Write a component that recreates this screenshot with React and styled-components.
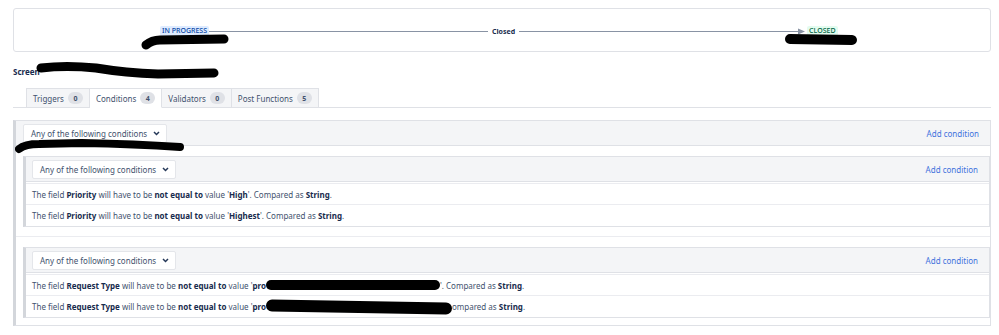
import React from 'react';
import styled, { createGlobalStyle } from 'styled-components';

const GlobalStyle = createGlobalStyle`
  body {
    margin: 0;
    background: #fff;
    font-family: "Noto Sans", "Open Sans", sans-serif;
    color: #42526e;
  }
`;

const Page = styled.div`
  padding: 8px 8px 0 13px;
  width: 978px;
`;

/* workflow diagram */
const Diagram = styled.div`
  position: relative;
  height: 42px;
  border: 1px solid #dfe1e6;
  border-radius: 3px;
  display: flex;
  align-items: center;
  padding-left: 146px;
`;

const Status = styled.span`
  position: relative;
  font-size: 7px;
  font-weight: 500;
  line-height: 10px;
  padding: 0 2px;
  border-radius: 2px;
  margin-top: 2px;
  background: ${p => (p.done ? '#e3fcef' : '#deebff')};
  color: ${p => (p.done ? '#006644' : '#0747a6')};
`;

const Line = styled.span`
  display: block;
  height: 1px;
  width: ${p => p.w}px;
  background: #8993a4;
  margin-top: 2px;
`;

const Transition = styled.span`
  font-size: 7px;
  font-weight: 700;
  color: #172b4d;
  padding: 0 4px;
  margin-top: 2px;
`;

const Arrow = styled.svg`
  display: block;
  margin: 2px 2px 0 -1px;
`;

const Scribble = styled.svg`
  position: absolute;
  left: ${p => p.x}px;
  top: ${p => p.y}px;
  pointer-events: none;
`;

const Ink = ({ d, w, h, x, y, sw = 9 }) => (
  <Scribble x={x} y={y} width={w} height={h} viewBox={`0 0 ${w} ${h}`}>
    <path d={d} fill="none" stroke="#000" strokeWidth={sw} strokeLinecap="round" strokeLinejoin="round" />
  </Scribble>
);

/* screen */
const ScreenRow = styled.div`
  display: flex;
  align-items: center;
  margin-top: 10px;
  height: 18px;
  font-size: 8px;
  font-weight: 700;
  color: #172b4d;
`;

const InlineInk = styled.svg`
  display: block;
  margin-left: -4px;
`;

/* tabs */
const Tabs = styled.div`
  display: flex;
  margin-top: 8px;
  padding-left: 13px;
  border-bottom: 1px solid #dfe1e6;
`;

const Tab = styled.div`
  display: flex;
  align-items: center;
  gap: 4px;
  height: 18px;
  padding: 0 6px;
  margin-bottom: -1px;
  font-size: 8px;
  color: #42526e;
  border: 1px solid #dfe1e6;
  border-left-width: ${p => (p.first ? 1 : 0)}px;
  border-bottom-color: ${p => (p.active ? '#fff' : '#dfe1e6')};
  background: ${p => (p.active ? '#fff' : '#f4f5f7')};
`;

const Badge = styled.span`
  display: inline-flex;
  align-items: center;
  justify-content: center;
  min-width: 15px;
  height: 12px;
  border-radius: 6px;
  background: #dfe1e6;
  font-size: 7px;
  font-weight: 700;
  color: #42526e;
`;

/* condition groups */
const Group = styled.div`
  margin-top: ${p => (p.nested ? 0 : 12)}px;
  border: 1px solid #dfe1e6;
  border-left: 3px solid #d3d6db;
  background: #fff;
`;

const GroupHeader = styled.div`
  position: relative;
  display: flex;
  align-items: center;
  justify-content: space-between;
  height: 24px;
  padding: 0 11px 0 ${p => (p.nested ? 6 : 7)}px;
  background: #f4f5f7;
  border-bottom: 1px solid #dfe1e6;
`;

const Select = styled.div`
  display: flex;
  align-items: center;
  justify-content: space-between;
  box-sizing: border-box;
  width: 144px;
  height: 19px;
  padding: 0 6px 0 7px;
  background: #fff;
  border: 1px solid #e4e6ea;
  border-radius: 2px;
  font-size: 8px;
  color: #42526e;
  white-space: nowrap;
`;

const AddLink = styled.a`
  font-size: 8px;
  color: #3f72dd;
  text-decoration: none;
`;

const GroupBody = styled.div`
  display: flex;
  flex-direction: column;
`;

const Slot = styled.div`
  padding: 10px 0 ${p => (p.last ? 7 : 9)}px 7px;
  border-bottom: ${p => (p.last ? 0 : 1)}px solid #ebecf0;
`;

const Rows = styled.div`
  margin-top: 1px;
  border-top: 1px solid #ebecf0;
`;

const Row = styled.div`
  display: flex;
  align-items: center;
  box-sizing: border-box;
  height: 21px;
  padding-left: 6px;
  border-bottom: ${p => (p.last ? 0 : 1)}px solid #ebecf0;
  font-size: 8px;
  color: #42526e;
  white-space: pre;

  b {
    color: #172b4d;
    font-weight: 700;
  }
`;

const Redacted = styled.span`
  display: inline-block;
  width: ${p => p.w}px;
  height: ${p => p.h}px;
  background: #000;
  border-radius: ${p => p.h / 2}px;
  transform: rotate(${p => p.tilt || 0}deg);
`;

const Chevron = () => (
  <svg width="7" height="5" viewBox="0 0 7 5">
    <path d="M1 1 L3.5 3.5 L6 1" fill="none" stroke="#253858" strokeWidth="1.5" />
  </svg>
);

const ConditionSelect = () => (
  <Select>
    <span>Any of the following conditions</span>
    <Chevron />
  </Select>
);

const rule = (field, value) => (
  <>
    The field <b>{field}</b> will have to be <b>not equal to</b> value '<b>{value}</b>'. Compared as <b>String</b>.
  </>
);

const tabs = [
  { label: 'Triggers', count: 0 },
  { label: 'Conditions', count: 4, active: true },
  { label: 'Validators', count: 0 },
  { label: 'Post Functions', count: 5 },
];

export default function App() {
  return (
    <Page>
      <GlobalStyle />
      <Diagram>
        <Status>
          IN PROGRESS
          <Ink x={-20} y={8} w={90} h={16} d="M6 11 Q12 6 20 6 L84 5" />
        </Status>
        <Line w={279} />
        <Transition>Closed</Transition>
        <Line w={280} />
        <Arrow width="7" height="7" viewBox="0 0 7 7">
          <path d="M0 0.5 L7 3.5 L0 6.5 Z" fill="#8993a4" />
        </Arrow>
        <Status done>
          CLOSED
          <Ink x={-26} y={6} w={80} h={16} sw={10} d="M9 7 L71 8" />
        </Status>
      </Diagram>

      <ScreenRow>
        Screen
        <InlineInk width="184" height="18" viewBox="0 0 184 18">
          <path d="M5 6 Q30 3 60 6 Q90 11 122 12 L178 11" fill="none" stroke="#000" strokeWidth="9" strokeLinecap="round" />
        </InlineInk>
      </ScreenRow>

      <Tabs>
        {tabs.map((t, i) => (
          <Tab key={t.label} first={i === 0} active={t.active}>
            {t.label}
            <Badge>{t.count}</Badge>
          </Tab>
        ))}
      </Tabs>

      <Group>
        <GroupHeader>
          <ConditionSelect />
          <AddLink href="#">Add condition</AddLink>
          <Ink x={-1} y={18} w={175} h={16} sw={8} d="M4 10 Q10 5 24 5 L67 4 Q120 5 165 8" />
        </GroupHeader>
        <GroupBody>
          <Slot>
            <Group nested>
              <GroupHeader nested>
                <ConditionSelect />
                <AddLink href="#">Add condition</AddLink>
              </GroupHeader>
              <Rows>
                <Row>{rule('Priority', 'High')}</Row>
                <Row last>{rule('Priority', 'Highest')}</Row>
              </Rows>
            </Group>
          </Slot>
          <Slot last>
            <Group nested>
              <GroupHeader nested>
                <ConditionSelect />
                <AddLink href="#">Add condition</AddLink>
              </GroupHeader>
              <Rows>
                <Row>
                  The field <b>Request Type</b> will have to be <b>not equal to</b> value '<b>pro</b>
                  <Redacted w={174} h={10} />'. Compared as <b>String</b>.
                </Row>
                <Row last>
                  The field <b>Request Type</b> will have to be <b>not equal to</b> value '<b>pro</b>
                  <Redacted w={186} h={12} tilt={1} />ompared as <b>String</b>.
                </Row>
              </Rows>
            </Group>
          </Slot>
        </GroupBody>
      </Group>
    </Page>
  );
}
